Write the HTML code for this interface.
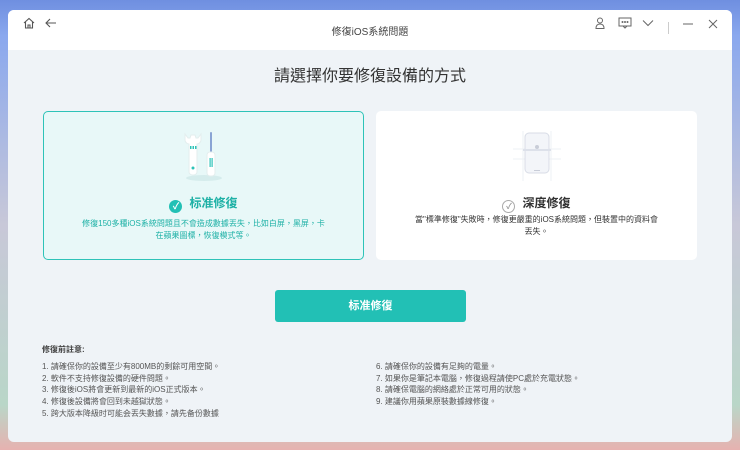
<!DOCTYPE html>
<html><head><meta charset="utf-8"><style>
*{margin:0;padding:0;box-sizing:border-box}
body{width:740px;height:450px;overflow:hidden;font-family:"Liberation Sans","Noto Sans CJK TC",sans-serif;background:linear-gradient(180deg,#6f8fe0 0,#8aa8ee 8%,#c8c8d8 50%,#b9d6c8 90%,#e6b2b0 100%);position:relative}
.win{position:absolute;left:8px;top:10px;width:724px;height:432px;background:#eff3f7;border-radius:6px;overflow:hidden}
.tb{height:40px;background:#fff;position:relative;font-size:10px;color:#333}
.tb .t{position:absolute;left:0;right:0;top:13px;text-align:center;color:#444}
.ic{position:absolute;top:8px;color:#666;font-size:13px}
h1{position:absolute;top:52px;left:0;right:0;text-align:center;font-size:16px;font-weight:normal;color:#333}
.card{position:absolute;top:101px;width:321px;height:149px;border-radius:5px;background:#fff;text-align:center}
.c1{left:35px;background:#e8f8f8;border:1.5px solid #2ec3b8}
.c2{left:368px}
.ttl{position:absolute;left:0;right:0;top:83px;font-size:12px;font-weight:bold;line-height:16px}
.desc{position:absolute;left:38px;right:38px;top:106px;font-size:8px;line-height:12px}
.btn{position:absolute;left:267px;top:280px;width:191px;height:32px;background:#22c0b5;border-radius:3px;color:#fff;font-size:11px;font-weight:bold;text-align:center;line-height:32px}
.notes{position:absolute;top:335px;font-size:8px;color:#555;line-height:11.7px}
</style></head><body>
<div class="win">
<div class="tb">
<svg class="ic" style="left:14px;top:6px" width="14" height="14" viewBox="0 0 14 14" fill="none" stroke="#555" stroke-width="1.1"><path d="M2 7L7 2.5 12 7M3.5 6v6h7V6M6 12V9h2v3"/></svg>
<svg class="ic" style="left:36px;top:6px" width="14" height="14" viewBox="0 0 14 14" fill="none" stroke="#555" stroke-width="1.1"><path d="M12 7H2M6 3L2 7l4 4"/></svg>
<div class="t">修復iOS系統問題</div>
<svg class="ic" style="left:586px;top:6px" width="12" height="14" viewBox="0 0 12 14" fill="none" stroke="#666" stroke-width="1"><circle cx="6" cy="4.5" r="2.5"/><path d="M2 12.5c0-3 1.5-4.5 4-4.5s4 1.5 4 4.5z"/></svg>
<svg class="ic" style="left:610px;top:7px" width="14" height="12" viewBox="0 0 14 12" fill="none" stroke="#666" stroke-width="1"><rect x="1" y="1" width="12" height="8"/><path d="M5 9l2 2 2-2"/><circle cx="4.5" cy="5" r=".5"/><circle cx="7" cy="5" r=".5"/><circle cx="9.5" cy="5" r=".5"/></svg>
<svg class="ic" style="left:634px;top:9px" width="12" height="8" viewBox="0 0 12 8" fill="none" stroke="#666" stroke-width="1"><path d="M1 1.5l5 5 5-5"/></svg>
<div style="position:absolute;left:660px;top:12px;width:1px;height:12px;background:#ccc"></div>
<svg class="ic" style="left:675px;top:13px" width="10" height="2"><path d="M0 1h10" stroke="#666"/></svg>
<svg class="ic" style="left:700px;top:9px" width="10" height="10" viewBox="0 0 10 10" stroke="#666"><path d="M1 1l8 8M9 1L1 9"/></svg>
</div>
<h1>請選擇你要修復設備的方式</h1>
<div class="card c1">
<svg style="position:absolute;left:138px;top:18px" width="44" height="52" viewBox="0 0 44 52"><ellipse cx="22" cy="48" rx="18" ry="3" fill="#d5ecec"/><path d="M3 4v6c0 2 2 4 4 4v28c0 2 2 3 4 3s4-1 4-3V14c2 0 4-2 4-4V4l-3 4h-2l-1-3h-4l-1 3H6z" fill="#fff" stroke="#e3eeee"/><rect x="8" y="16" width="1.5" height="3" fill="#2ec3b8"/><rect x="10.5" y="16" width="1.5" height="3" fill="#2ec3b8"/><rect x="13" y="16" width="1.5" height="3" fill="#2ec3b8"/><circle cx="11" cy="38" r="1.5" fill="#2ec3b8"/><rect x="28" y="2" width="2" height="22" rx="1" fill="#8aa4d4"/><rect x="25" y="22" width="8" height="24" rx="3" fill="#fff" stroke="#e3eeee"/><rect x="27.5" y="28" width="1.2" height="9" fill="#2ec3b8"/><rect x="29.5" y="28" width="1.2" height="9" fill="#2ec3b8"/></svg>
<div class="ttl" style="color:#1eb1a6"><span style="display:inline-block;width:13px;height:13px;border-radius:50%;background:#22c0b5;color:#fff;font-size:9px;line-height:13px;vertical-align:-2px;margin-right:7px">✓</span>标准修復</div>
<div class="desc" style="color:#1eb1a6">修復150多種iOS系統問題且不會造成數據丟失，比如白屏，黑屏，卡在蘋果圖標，恢復模式等。</div>
</div>
<div class="card c2">
<svg style="position:absolute;left:133px;top:16px" width="56" height="56" viewBox="0 0 56 56"><path d="M4 22h48M4 32h48M14 4v50M42 4v50" stroke="#eef0f4"/><rect x="16" y="6" width="24" height="40" rx="4" fill="#f3f5f9" stroke="#d8dce6"/><rect x="14" y="22" width="28" height="2" fill="#dde1ea"/><circle cx="28" cy="20" r="2" fill="#c9cdd8"/><rect x="25" y="43" width="6" height="1" fill="#c9cdd8"/></svg>
<div class="ttl" style="color:#333;top:84px"><span style="display:inline-block;width:13px;height:13px;border-radius:50%;border:1px solid #aaa;color:#999;font-size:8px;line-height:11px;vertical-align:-2px;margin-right:7px">✓</span>深度修復</div>
<div class="desc" style="color:#333;top:103px;left:36px;right:36px">當"標準修復"失敗時，修復更嚴重的iOS系統問題，但裝置中的資料會丟失。</div>
</div>
<div class="btn">标准修復</div>
<div class="notes" style="left:34px;top:334px;font-weight:bold;color:#444;font-size:8px">修復前註意:</div>
<div class="notes" style="left:34px;top:351px">1. 請確保你的設備至少有800MB的剩餘可用空間。<br>2. 軟件不支持修復設備的硬件問題。<br>3. 修復後iOS將會更新到最新的iOS正式版本。<br>4. 修復後設備將會回到未越獄狀態。<br>5. 跨大版本降級时可能会丟失數據，請先备份數據</div>
<div class="notes" style="left:368px;top:351px">6. 請確保你的設備有足夠的電量。<br>7. 如果你是筆記本電腦，修復過程請使PC處於充電狀態。<br>8. 請確保電腦的網絡處於正常可用的狀態。<br>9. 建議你用蘋果原裝數據線修復。</div>
</div>
</body></html>
